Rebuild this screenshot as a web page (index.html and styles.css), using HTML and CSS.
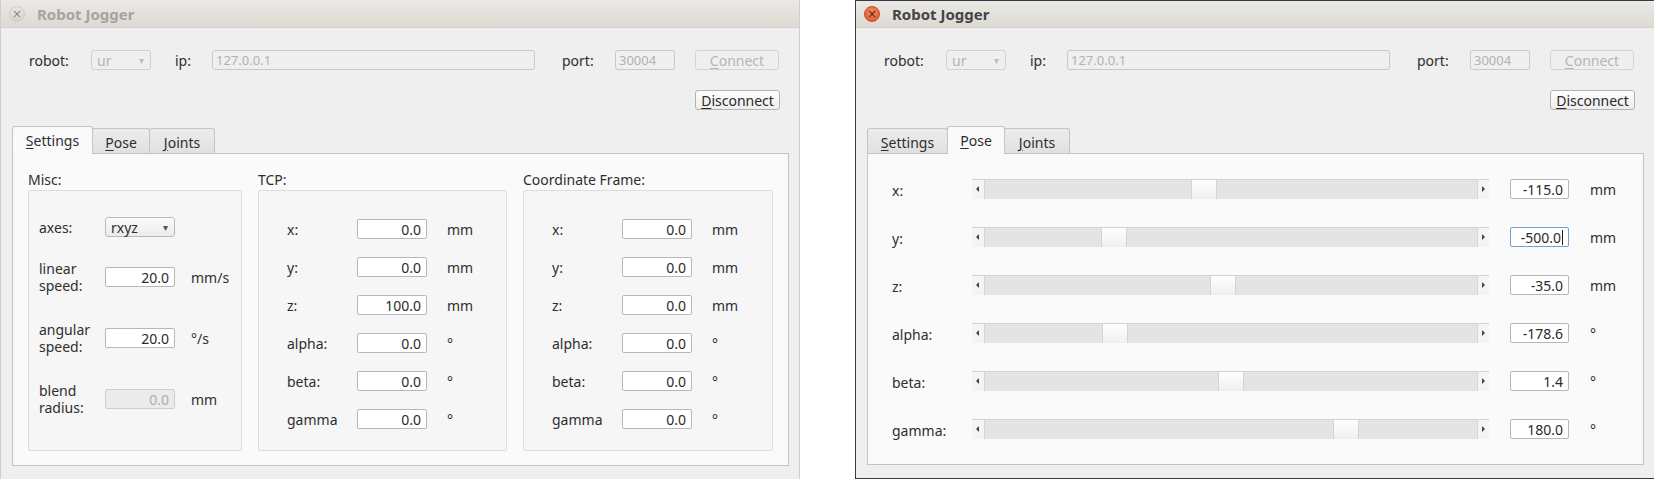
FILE: index.html
```html
<!DOCTYPE html>
<html>
<head>
<meta charset="utf-8">
<title>Robot Jogger</title>
<link rel="stylesheet" href="styles.css">
</head>
<body>
<div class="desktop">

  <section class="window inactive">
    <header class="titlebar">
      <span class="close">×</span>
      <span class="title">Robot Jogger</span>
    </header>
    <div class="client">
      <div class="conn-row">
        <span class="lbl lbl-robot">robot:</span>
        <span class="combo disabled"><span>ur</span><span class="arrow">▾</span></span>
        <span class="lbl lbl-ip">ip:</span>
        <span class="field disabled ip">127.0.0.1</span>
        <span class="lbl lbl-port">port:</span>
        <span class="field disabled port">30004</span>
        <span class="btn disabled connect"><u>C</u>onnect</span>
      </div>
      <div class="disc-row">
        <span class="btn disconnect"><u>D</u>isconnect</span>
      </div>
      <div class="tabs">
        <span class="tab tab-settings selected"><u>S</u>ettings</span>
        <span class="tab tab-pose"><u>P</u>ose</span>
        <span class="tab tab-joints"><u>J</u>oints</span>
      </div>
      <div class="pane settings">
        <div class="col col-misc">
          <div class="group-title">Misc:</div>
          <div class="group misc">
            <div class="mrow single">
              <span class="mlbl">axes:</span>
              <span class="combo axes"><span>rxyz</span><span class="arrow">▾</span></span>
            </div>
            <div class="mrow r2">
              <span class="mlbl">linear<br>speed:</span>
              <span class="num">20.0</span>
              <span class="munit">mm/s</span>
            </div>
            <div class="mrow r3">
              <span class="mlbl">angular<br>speed:</span>
              <span class="num">20.0</span>
              <span class="munit">°/s</span>
            </div>
            <div class="mrow r3">
              <span class="mlbl">blend<br>radius:</span>
              <span class="num disabled">0.0</span>
              <span class="munit">mm</span>
            </div>
          </div>
        </div>
        <div class="col col-tcp">
          <div class="group-title">TCP:</div>
          <div class="group form">
            <div class="frow"><span class="flbl">x:</span><span class="num">0.0</span><span class="funit">mm</span></div>
            <div class="frow"><span class="flbl">y:</span><span class="num">0.0</span><span class="funit">mm</span></div>
            <div class="frow"><span class="flbl">z:</span><span class="num">100.0</span><span class="funit">mm</span></div>
            <div class="frow"><span class="flbl">alpha:</span><span class="num">0.0</span><span class="funit">°</span></div>
            <div class="frow"><span class="flbl">beta:</span><span class="num">0.0</span><span class="funit">°</span></div>
            <div class="frow"><span class="flbl">gamma</span><span class="num">0.0</span><span class="funit">°</span></div>
          </div>
        </div>
        <div class="col col-cf">
          <div class="group-title">Coordinate Frame:</div>
          <div class="group form">
            <div class="frow"><span class="flbl">x:</span><span class="num">0.0</span><span class="funit">mm</span></div>
            <div class="frow"><span class="flbl">y:</span><span class="num">0.0</span><span class="funit">mm</span></div>
            <div class="frow"><span class="flbl">z:</span><span class="num">0.0</span><span class="funit">mm</span></div>
            <div class="frow"><span class="flbl">alpha:</span><span class="num">0.0</span><span class="funit">°</span></div>
            <div class="frow"><span class="flbl">beta:</span><span class="num">0.0</span><span class="funit">°</span></div>
            <div class="frow"><span class="flbl">gamma</span><span class="num">0.0</span><span class="funit">°</span></div>
          </div>
        </div>
      </div>
    </div>
  </section>

  <section class="window active">
    <header class="titlebar">
      <span class="close">×</span>
      <span class="title">Robot Jogger</span>
    </header>
    <div class="client">
      <div class="conn-row">
        <span class="lbl lbl-robot">robot:</span>
        <span class="combo disabled"><span>ur</span><span class="arrow">▾</span></span>
        <span class="lbl lbl-ip">ip:</span>
        <span class="field disabled ip">127.0.0.1</span>
        <span class="lbl lbl-port">port:</span>
        <span class="field disabled port">30004</span>
        <span class="btn disabled connect"><u>C</u>onnect</span>
      </div>
      <div class="disc-row">
        <span class="btn disconnect"><u>D</u>isconnect</span>
      </div>
      <div class="tabs">
        <span class="tab tab-settings"><u>S</u>ettings</span>
        <span class="tab tab-pose selected"><u>P</u>ose</span>
        <span class="tab tab-joints"><u>J</u>oints</span>
      </div>
      <div class="pane pose">
        <div class="prow">
          <span class="plbl">x:</span>
          <div class="slider"><span class="sarrow left"></span><div class="trough"><span class="handle" style="--v:0.442"></span></div><span class="sarrow right"></span></div>
          <span class="num pnum">-115.0</span><span class="punit">mm</span>
        </div>
        <div class="prow">
          <span class="plbl">y:</span>
          <div class="slider"><span class="sarrow left"></span><div class="trough"><span class="handle" style="--v:0.249"></span></div><span class="sarrow right"></span></div>
          <span class="num pnum focus">-500.0<span class="caret"></span></span><span class="punit">mm</span>
        </div>
        <div class="prow">
          <span class="plbl">z:</span>
          <div class="slider"><span class="sarrow left"></span><div class="trough"><span class="handle" style="--v:0.483"></span></div><span class="sarrow right"></span></div>
          <span class="num pnum">-35.0</span><span class="punit">mm</span>
        </div>
        <div class="prow">
          <span class="plbl">alpha:</span>
          <div class="slider"><span class="sarrow left"></span><div class="trough"><span class="handle" style="--v:0.251"></span></div><span class="sarrow right"></span></div>
          <span class="num pnum">-178.6</span><span class="punit">°</span>
        </div>
        <div class="prow">
          <span class="plbl">beta:</span>
          <div class="slider"><span class="sarrow left"></span><div class="trough"><span class="handle" style="--v:0.5"></span></div><span class="sarrow right"></span></div>
          <span class="num pnum">1.4</span><span class="punit">°</span>
        </div>
        <div class="prow">
          <span class="plbl">gamma:</span>
          <div class="slider"><span class="sarrow left"></span><div class="trough"><span class="handle" style="--v:0.747"></span></div><span class="sarrow right"></span></div>
          <span class="num pnum">180.0</span><span class="punit">°</span>
        </div>
      </div>
    </div>
  </section>

</div>
</body>
</html>
```

FILE: styles.css
```css
* { box-sizing: border-box; margin: 0; padding: 0; }
html, body { width: 1654px; height: 479px; overflow: hidden; background: #ffffff; }
body {
  font-family: "Noto Sans", "Liberation Sans", sans-serif;
  font-size: 14px;
  color: #2e2e2e;
}
u { text-decoration: underline; text-underline-offset: 2px; }

.desktop { display: flex; gap: 55px; height: 479px; }

.window {
  width: 800px;
  height: 479px;
  flex: none;
  display: flex;
  flex-direction: column;
  background: #efefef;
  border-left: 1px solid #cdcdcd;
  border-right: 1px solid #cdcdcd;
}
.window.active {
  border-left: 1px solid #353a44;
  border-top: 1px solid #353a44;
  border-bottom: 1px solid #353a44;
}

/* title bar */
.titlebar {
  height: 28px;
  flex: none;
  display: flex;
  align-items: center;
  padding-left: 8px;
  background: linear-gradient(#ebe9e5, #dddad3);
  border-bottom: 1px solid #d3cfc9;
  border-radius: 5px 5px 0 0;
}
.active .titlebar { height: 27px; }
.close {
  width: 16px;
  height: 16px;
  border-radius: 50%;
  display: flex;
  align-items: center;
  justify-content: center;
  font-size: 12px;
  line-height: 1;
  font-family: "DejaVu Sans", sans-serif;
  background: linear-gradient(#e9e7e3, #d6d2cc);
  border: 1px solid #cfcbc5;
  color: #8e8a85;
}
.active .close {
  background: radial-gradient(circle at 50% 35%, #f68a63, #e2522a);
  border: 1px solid #c8471f;
  color: #5a2310;
}
.title {
  margin-left: 12px;
  font-weight: bold;
  font-size: 15px;
  color: #a7a39e;
}
.active .title { color: #454545; }

/* client area */
.client {
  flex: 1;
  display: flex;
  flex-direction: column;
  padding: 22px 10px 13px 11px;
}

.conn-row {
  display: flex;
  align-items: center;
  height: 20px;
  padding-left: 17px;
}
.lbl { flex: none; }
.lbl-robot { width: 62px; }
.lbl-ip { margin-left: 24px; width: 37px; }
.lbl-port { margin-left: 27px; width: 53px; }

.field {
  height: 20px;
  display: flex;
  align-items: center;
  padding-left: 3px;
  border: 1px solid #c9c9c9;
  border-radius: 3px;
  font-size: 13px;
}
.field.disabled { color: #b2b2b2; background: #efefef; }
.field.ip { width: 323px; }
.field.port { width: 60px; }

.combo {
  height: 20px;
  display: flex;
  align-items: center;
  justify-content: space-between;
  padding: 0 6px 0 5px;
  border: 1px solid #b9b9b9;
  border-radius: 3px;
  background: linear-gradient(#fbfbfb, #ebebeb);
  font-size: 14px;
}
.combo .arrow { font-size: 10px; color: #555; font-family: "DejaVu Sans", sans-serif; }
.combo.disabled {
  width: 60px;
  color: #b4b4b4;
  background: #efefef;
  border-color: #d0d0d0;
}
.combo.disabled .arrow { color: #bdbdbd; }

.btn {
  height: 20px;
  display: flex;
  align-items: center;
  justify-content: center;
  border: 1px solid #b3b3b3;
  border-radius: 3px;
  background: linear-gradient(#fdfdfd, #eeeeee);
  font-size: 14px;
  color: #2a2a2a;
}
.btn.disabled {
  color: #b6b6b6;
  border-color: #d4d4d4;
  background: #efefef;
}
.btn.connect { margin-left: 20px; width: 84px; }

.disc-row {
  display: flex;
  justify-content: flex-end;
  margin-top: 20px;
  padding-right: 9px;
  height: 20px;
}
.btn.disconnect { width: 85px; }

/* tabs */
.tabs {
  display: flex;
  align-items: flex-end;
  height: 27px;
  margin-top: 16px;
  position: relative;
  z-index: 1;
}
.tab {
  height: 25px;
  display: flex;
  align-items: center;
  justify-content: center;
  border: 1px solid #c4c4c4;
  border-bottom: none;
  border-radius: 3px 3px 0 0;
  background: linear-gradient(#ececec, #e0e0e0);
  padding-top: 2px;
}
.tab + .tab { margin-left: -1px; }
.tab-settings { width: 81px; }
.tab-pose { width: 58px; }
.tab-joints { width: 66px; }
.tab.selected {
  height: 28px;
  margin-bottom: -1px;
  background: #fafafa;
  position: relative;
  z-index: 2;
  padding-top: 0;
}

/* pane */
.pane {
  flex: 1;
  border: 1px solid #c3c3c3;
  background: #fafafa;
}

.pane.settings {
  display: flex;
  gap: 16px;
  padding: 16px 14px 13px 15px;
}
.col { display: flex; flex-direction: column; }
.col-misc { width: 214px; }
.col-tcp { width: 249px; }
.col-cf { width: 250px; }
.group-title { height: 20px; line-height: 20px; }
.group {
  height: 261px;
  border: 1px solid #dddddd;
  border-radius: 2px;
  background: #f6f6f6;
}

.num {
  height: 20px;
  width: 70px;
  display: flex;
  align-items: center;
  justify-content: flex-end;
  padding-right: 5px;
  background: #ffffff;
  border: 1px solid #b7b7b7;
  border-radius: 2px;
  color: #2a2a2a;
}
.num.disabled { background: #ebebeb; color: #adadad; border-color: #cdcdcd; }

/* misc */
.group.misc { padding: 26px 0 0 10px; display: flex; flex-direction: column; }
.mrow { display: flex; align-items: center; height: 34px; }
.mrow.single { height: 20px; }
.mrow.r2 { margin-top: 23px; }
.mrow.r3 { margin-top: 27px; }
.mlbl { width: 66px; line-height: 17px; }
.combo.axes { width: 70px; }
.munit { margin-left: 16px; }

/* tcp / cf forms */
.group.form {
  padding: 28px 0 0 28px;
  display: flex;
  flex-direction: column;
  gap: 18px;
}
.frow { display: flex; align-items: center; height: 20px; }
.flbl { width: 70px; }
.funit { margin-left: 20px; }

/* pose */
.pane.pose {
  padding: 25px 0 0 24px;
  display: flex;
  flex-direction: column;
  gap: 28px;
}
.prow { display: flex; align-items: center; height: 20px; }
.plbl { width: 80px; padding-top: 2px; }
.slider {
  width: 517px;
  height: 20px;
  display: flex;
  border-top: 1px solid #d2d2d2;
}
.sarrow {
  flex: none;
  background: #f4f4f4;
  position: relative;
}
.sarrow.left { width: 13px; border-right: 1px solid #d6d6d6; }
.sarrow.right { width: 12px; border-left: 1px solid #d6d6d6; }
.sarrow::after {
  content: "";
  position: absolute;
  top: 6px;
  width: 0;
  height: 0;
  border-top: 3px solid transparent;
  border-bottom: 3px solid transparent;
}
.sarrow.left::after { left: 4px; border-right: 3px solid #444; }
.sarrow.right::after { left: 4px; border-left: 3px solid #444; }
.trough {
  flex: 1;
  background: #e4e4e4;
  display: flex;
}
.handle {
  flex: none;
  width: 26px;
  height: 100%;
  margin-left: calc((100% - 26px) * var(--v));
  background: linear-gradient(#ffffff, #efefef);
  border-left: 1px solid #d4d4d4;
  border-right: 1px solid #d4d4d4;
}
.num.pnum { width: 59px; margin-left: 21px; }
.num.focus { border-color: #729fd4; }
.caret { width: 1px; height: 15px; background: #222; margin-left: 1px; }
.punit { margin-left: 21px; }
```
